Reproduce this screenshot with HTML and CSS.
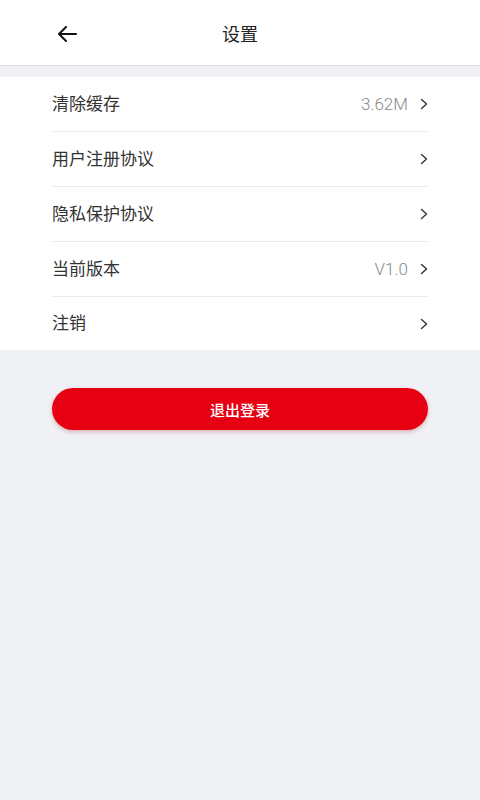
FILE: index.html
```html
<!DOCTYPE html>
<html lang="zh">
<head>
<meta charset="utf-8">
<link rel="stylesheet" href="styles.css">
</head>
<body>
<header class="topbar">
  <span class="back">
    <svg width="20" height="16" viewBox="0 0 20 16"><path d="M19 8H2M9 1L2 8l7 7" fill="none" stroke="#111" stroke-width="2" stroke-linecap="round" stroke-linejoin="round"/></svg>
  </span>
  <h1 class="title">设置</h1>
</header>
<ul class="list">
  <li class="row"><span class="label">清除缓存</span><span class="right"><span class="value">3.62M</span><svg class="chev" width="8" height="12" viewBox="0 0 8 12"><path d="M1.5 1.5L6.5 6l-5 4.5" fill="none" stroke="#333" stroke-width="1.4" stroke-linecap="round" stroke-linejoin="round"/></svg></span></li>
  <li class="row"><span class="label">用户注册协议</span><span class="right"><svg class="chev" width="8" height="12" viewBox="0 0 8 12"><path d="M1.5 1.5L6.5 6l-5 4.5" fill="none" stroke="#333" stroke-width="1.4" stroke-linecap="round" stroke-linejoin="round"/></svg></span></li>
  <li class="row"><span class="label">隐私保护协议</span><span class="right"><svg class="chev" width="8" height="12" viewBox="0 0 8 12"><path d="M1.5 1.5L6.5 6l-5 4.5" fill="none" stroke="#333" stroke-width="1.4" stroke-linecap="round" stroke-linejoin="round"/></svg></span></li>
  <li class="row"><span class="label">当前版本</span><span class="right"><span class="value">V1.0</span><svg class="chev" width="8" height="12" viewBox="0 0 8 12"><path d="M1.5 1.5L6.5 6l-5 4.5" fill="none" stroke="#333" stroke-width="1.4" stroke-linecap="round" stroke-linejoin="round"/></svg></span></li>
  <li class="row"><span class="label">注销</span><span class="right"><svg class="chev" width="8" height="12" viewBox="0 0 8 12"><path d="M1.5 1.5L6.5 6l-5 4.5" fill="none" stroke="#333" stroke-width="1.4" stroke-linecap="round" stroke-linejoin="round"/></svg></span></li>
</ul>
<div class="actions">
  <button class="logout">退出登录</button>
</div>
</body>
</html>
```
FILE: styles.css
```css
html, body {
  margin: 0;
  padding: 0;
}
body {
  background: #f0f1f5;
  font-family: Roboto, "Noto Sans CJK SC", sans-serif;
  min-height: 800px;
}
.topbar {
  height: 65px;
  background: #fff;
  border-bottom: 1px solid #dcdcdc;
  display: flex;
  align-items: center;
  justify-content: center;
  position: relative;
}
.back {
  position: absolute;
  left: 57px;
  top: 26px;
  display: flex;
}
.title {
  margin: 0;
  font-size: 18px;
  font-weight: 400;
  color: #222;
  line-height: 1;
  padding-top: 4px;
}
.list {
  list-style: none;
  margin: 11px 0 0;
  padding: 0 52px;
  background: #fff;
}
.row {
  height: 54px;
  display: flex;
  align-items: center;
  justify-content: space-between;
  border-bottom: 1px solid #ececec;
}
.row:last-child {
  border-bottom: none;
  height: 53px;
}
.label {
  font-size: 17px;
  color: #333;
  line-height: 1;
}
.right {
  display: flex;
  align-items: center;
  gap: 12px;
}
.value {
  font-size: 17px;
  font-weight: 300;
  color: #8a8a8a;
  line-height: 1;
}
.chev {
  display: block;
}
.actions {
  padding: 38px 52px 0;
}
.logout {
  width: 100%;
  height: 42px;
  border: none;
  border-radius: 21px;
  background: #e60012;
  color: #fff;
  font-family: "Noto Sans CJK SC", sans-serif;
  font-size: 15px;
  font-weight: 500;
  box-shadow: 0 2px 4px rgba(150, 0, 0, 0.25);
}
```
